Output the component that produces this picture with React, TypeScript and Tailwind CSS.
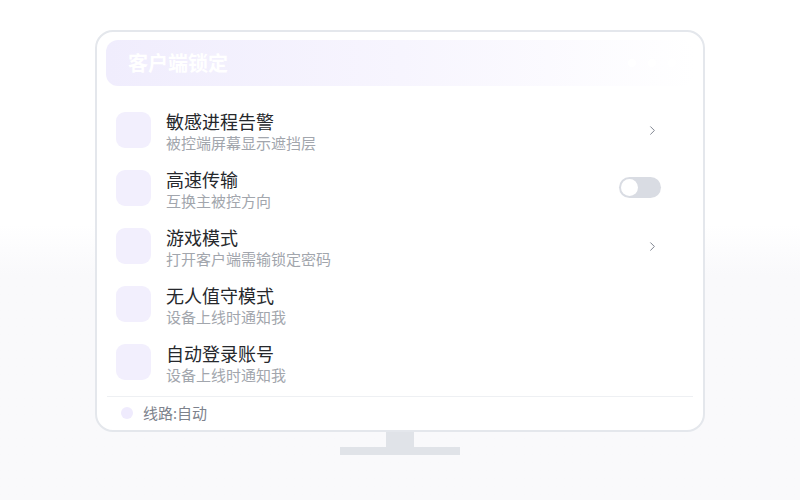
import React from 'react';
import { ChevronRight } from 'lucide-react';

const rows = [
  { title: '敏感进程告警', sub: '被控端屏幕显示遮挡层', action: 'arrow' },
  { title: '高速传输', sub: '互换主被控方向', action: 'toggle' },
  { title: '游戏模式', sub: '打开客户端需输锁定密码', action: 'arrow' },
  { title: '无人值守模式', sub: '设备上线时通知我', action: 'none' },
  { title: '自动登录账号', sub: '设备上线时通知我', action: 'none' },
];

const App: React.FC = () => {
  return (
    <div
      className="w-[800px] h-[500px] flex flex-col items-center pt-[30px] bg-gradient-to-b from-white from-45% to-[#f9f9fb] to-55%"
      style={{ fontFamily: '"Noto Sans", "Noto Sans CJK SC", sans-serif' }}
    >
      {/* screen */}
      <div className="w-[610px] h-[402px] border-2 border-[#e4e7ec] rounded-[18px] bg-white px-[9px] pt-[8px] flex flex-col">
        <div className="h-[46px] shrink-0 rounded-[12px] bg-gradient-to-r from-[#f0edfd] via-[#f7f5fe] to-white flex items-center justify-between pl-[22px] pr-[18px]">
          <span className="text-[20px] font-bold text-white leading-none mt-[2px]">客户端锁定</span>
          <div className="flex gap-[12px]">
            <span className="w-[8px] h-[8px] rounded-full bg-white" />
            <span className="w-[8px] h-[8px] rounded-full bg-white" />
            <span className="w-[8px] h-[8px] rounded-full bg-white" />
          </div>
        </div>

        <div className="pt-[15px] px-[10px] flex flex-col">
          {rows.map((r) => (
            <div key={r.title} className="h-[58px] flex items-center">
              <div className="w-[35px] h-[36px] rounded-[9px] bg-[#f2effd] shrink-0" />
              <div className="ml-[15px] flex-1 flex flex-col mt-[4px]">
                <span className="text-[18px] leading-[22px] text-[#26282c]">{r.title}</span>
                <span className="text-[15px] leading-[20px] text-[#a2a6ad]">{r.sub}</span>
              </div>
              <div className="w-[42px] mr-[23px] flex justify-end">
                {r.action === 'arrow' && (
                  <ChevronRight size={15} strokeWidth={1.6} className="text-[#7f8590] mr-[1px]" />
                )}
                {r.action === 'toggle' && (
                  <div className="w-[42px] h-[21px] rounded-full bg-[#d9dce3] flex items-center pl-[2px] -mt-[1px]">
                    <span className="w-[17px] h-[17px] rounded-full bg-white" />
                  </div>
                )}
              </div>
            </div>
          ))}
        </div>

        <div className="mt-[5px] mx-[1px] border-t border-[#eef0f3]" />
        <div className="flex items-center h-[32px] pl-[12px]">
          <span className="w-[12px] h-[12px] rounded-full bg-[#efebfd] ml-[3px]" />
          <span className="ml-[10px] text-[15px] text-[#7d828c]">线路:自动</span>
        </div>
      </div>

      {/* stand */}
      <div className="w-[28px] h-[15px] bg-[#e0e3e8]" />
      <div className="w-[120px] h-[8px] bg-[#e0e3e8]" />
    </div>
  );
};

export default App;
